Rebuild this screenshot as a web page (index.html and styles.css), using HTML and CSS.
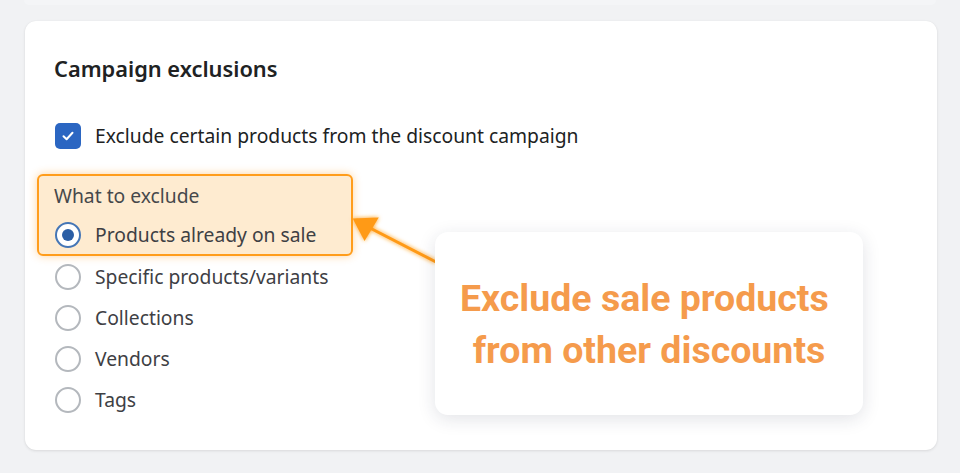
FILE: index.html
```html
<!DOCTYPE html>
<html>
<head>
<meta charset="utf-8">
<link rel="stylesheet" href="styles.css">
</head>
<body>
<div class="topstrip"></div>
<div class="card">
  <h2 class="title">Campaign exclusions</h2>
  <div class="row check-row">
    <span class="checkbox">
      <svg width="14" height="14" viewBox="0 0 14 14"><path d="M2.5 7.2 L5.6 10.2 L11.5 3.8" fill="none" stroke="#fff" stroke-width="2" stroke-linecap="round" stroke-linejoin="round"/></svg>
    </span>
    <span class="label dark">Exclude certain products from the discount campaign</span>
  </div>
  <div class="group">
    <div class="highlight">
      <div class="row sub">What to exclude</div>
      <div class="row"><span class="radio on"></span><span class="label">Products already on sale</span></div>
    </div>
    <div class="row"><span class="radio"></span><span class="label">Specific products/variants</span></div>
    <div class="row"><span class="radio"></span><span class="label">Collections</span></div>
    <div class="row"><span class="radio"></span><span class="label">Vendors</span></div>
    <div class="row"><span class="radio"></span><span class="label">Tags</span></div>
  </div>
  <svg class="arrow" width="120" height="80" viewBox="0 0 120 80">
    <defs>
      <filter id="glow" x="-30%" y="-30%" width="160%" height="160%">
        <feGaussianBlur stdDeviation="2" result="b"/>
        <feMerge><feMergeNode in="b"/><feMergeNode in="SourceGraphic"/></feMerge>
      </filter>
    </defs>
    <g filter="url(#glow)">
      <line x1="22" y1="18" x2="88" y2="52" stroke="#ff9a14" stroke-width="3"/>
      <polygon points="5,8 31,8 16,31" fill="#ff9a14" transform="rotate(-2 16 16)"/>
    </g>
  </svg>
  <div class="callout">
    <p>Exclude sale products&nbsp;<br>from other discounts</p>
  </div>
</div>
</body>
</html>
```
FILE: styles.css
```css
* { box-sizing: border-box; }
html, body { margin: 0; padding: 0; }
body {
  width: 960px;
  height: 473px;
  background: #f1f2f4;
  font-family: "Noto Sans", "Open Sans", sans-serif;
  overflow: hidden;
}
.topstrip {
  height: 5px;
  margin: 0 24px;
  background: #f4f5f7;
  border-radius: 0 0 8px 8px;
}
.card {
  position: relative;
  margin: 16px 23px 0 25px;
  height: 429px;
  background: #fff;
  border-radius: 11px;
  box-shadow: 0 1px 3px rgba(0,0,0,0.10), 0 0 1px rgba(0,0,0,0.06);
  padding: 34px 0 0 29px;
}
.title {
  margin: 0;
  font-size: 21.8px;
  line-height: 28px;
  font-weight: 600;
  color: #202223;
}
.row {
  display: flex;
  align-items: center;
  height: 41px;
  gap: 14px;
  font-size: 19.3px;
  color: #3e4044;
}
.check-row { margin-top: 32px; }
.checkbox {
  width: 26px;
  height: 26px;
  margin-left: 1px;
  border-radius: 5px;
  background: #2b66c2;
  display: flex;
  align-items: center;
  justify-content: center;
  flex: none;
}
.label.dark { color: #202223; }
.group { margin-top: 18px; }
.highlight {
  width: 316px;
  margin-left: -17px;
  padding: 0 15px;
  border: 2px solid #ff9d1c;
  border-radius: 6px;
  background: #feebd0;
  box-shadow: 0 0 9px rgba(255, 160, 40, 0.45);
}
.highlight .row { height: 39px; }
.sub { color: #46484b; }
.radio {
  width: 26px;
  height: 26px;
  margin-left: 1px;
  border-radius: 50%;
  border: 2px solid #b4b8bd;
  background: #fff;
  flex: none;
  display: flex;
  align-items: center;
  justify-content: center;
}
.radio.on {
  border-color: #4576b6;
  border-width: 2.5px;
}
.radio.on::after {
  content: "";
  width: 12px;
  height: 12px;
  border-radius: 50%;
  background: #2a5ea5;
}
.arrow {
  position: absolute;
  left: 323px;
  top: 189px;
}
.callout {
  position: absolute;
  left: 410px;
  top: 211px;
  width: 428px;
  height: 183px;
  background: #fff;
  border-radius: 13px;
  box-shadow: 0 4px 18px rgba(30, 40, 70, 0.13);
  display: flex;
  align-items: center;
  justify-content: center;
}
.callout p {
  margin: 0;
  text-align: center;
  font-family: Roboto, sans-serif;
  font-weight: 700;
  font-size: 37.5px;
  line-height: 52px;
  color: #f59b4c;
}
```
